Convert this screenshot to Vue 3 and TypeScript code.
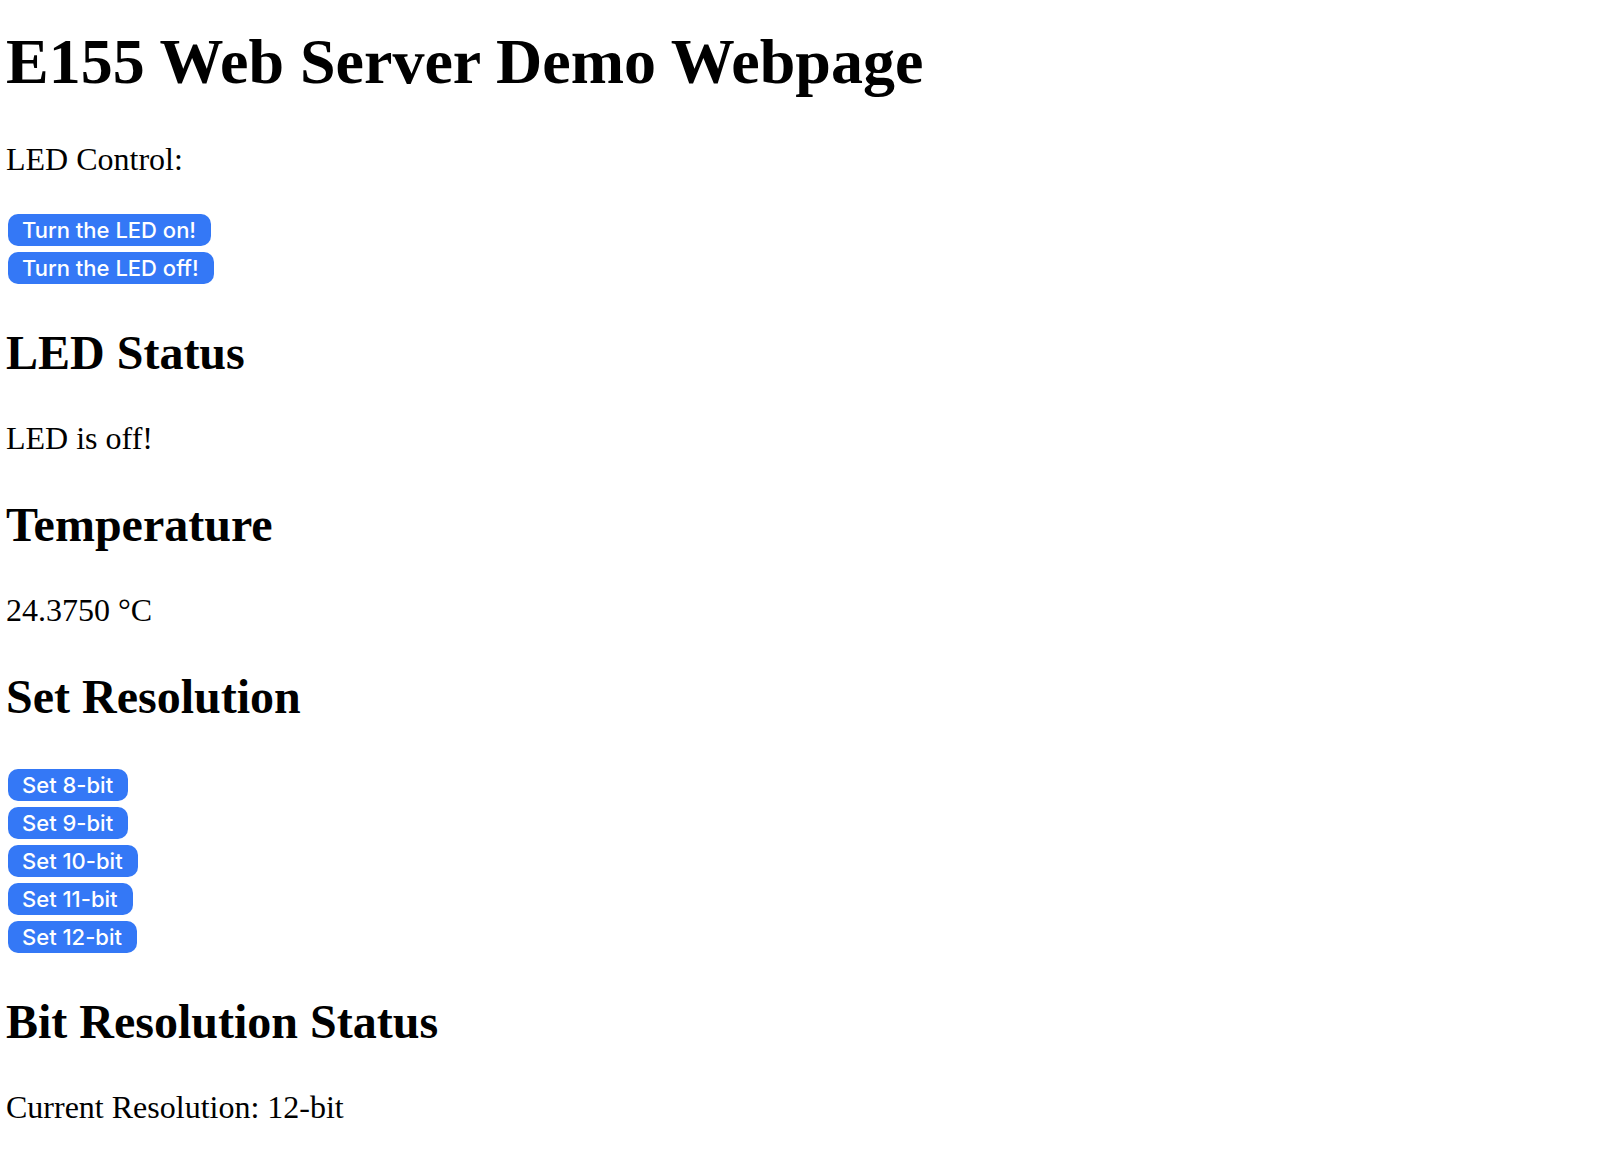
<script setup lang="ts">
import { ref } from 'vue'

const ledOn = ref(false)
const temperature = ref('24.3750')
const resolution = ref(12)
const resolutions: number[] = [8, 9, 10, 11, 12]
</script>

<template>
  <main class="page">
    <h1>E155 Web Server Demo Webpage</h1>
    <p>LED Control:</p>
    <div class="controls">
      <button type="button" @click="ledOn = true">Turn the LED on!</button>
      <button type="button" @click="ledOn = false">Turn the LED off!</button>
    </div>
    <h2>LED Status</h2>
    <p>LED is {{ ledOn ? 'on' : 'off' }}!</p>
    <h2>Temperature</h2>
    <p>{{ temperature }} °C</p>
    <h2>Set Resolution</h2>
    <div class="controls">
      <button v-for="bits in resolutions" :key="bits" type="button" @click="resolution = bits">Set {{ bits }}-bit</button>
    </div>
    <h2>Bit Resolution Status</h2>
    <p>Current Resolution: {{ resolution }}-bit</p>
  </main>
</template>

<style>
body {
  margin: 0;
  background: #fff;
}
</style>

<style scoped>
.page {
  padding: 0 6px;
  color: #000;
  font-family: "Liberation Serif", "Times New Roman", serif;
  font-size: 32px;
  line-height: 36px;
}

h1 {
  margin: 25px 0 42px;
  font-size: 64px;
  line-height: 74px;
}

h2 {
  margin: 42px 0 40px;
  font-size: 48px;
  line-height: 54px;
}

p {
  margin: 32px 0;
}

.controls {
  display: flex;
  flex-direction: column;
  align-items: flex-start;
  gap: 6px;
  padding: 5px 2px 0;
}

button {
  height: 32px;
  margin: 0;
  padding: 0 15px 0 14px;
  border: 0;
  border-radius: 10px;
  background: #3478f6;
  color: #fff;
  font-family: Inter, sans-serif;
  font-size: 22px;
  font-weight: 500;
  line-height: 32px;
}
</style>
